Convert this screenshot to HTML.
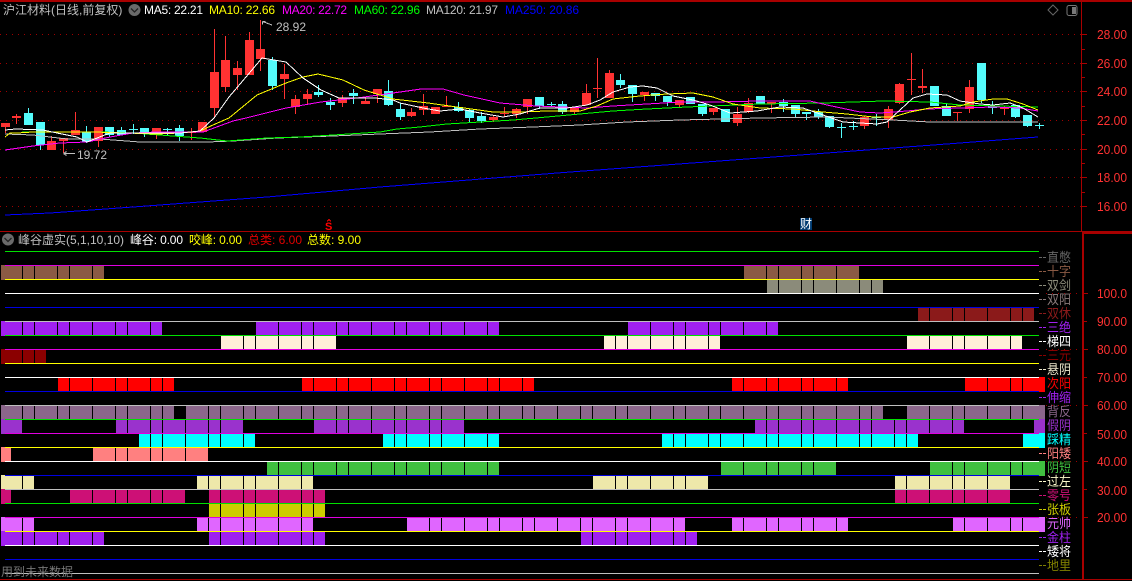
<!DOCTYPE html>
<html><head><meta charset="utf-8"><title>沪江材料</title>
<style>
html,body{margin:0;padding:0;background:#000;width:1132px;height:581px;overflow:hidden}
svg{display:block}
text{font-family:"Liberation Sans","WenQuanYi Zen Hei","Noto Sans CJK SC",sans-serif;font-size:12px}
.a{fill:#ff3232;font-size:13px}
.r text{font-size:13px}
</style></head><body>
<svg width="1132" height="581" viewBox="0 0 1132 581" xmlns="http://www.w3.org/2000/svg">
<rect width="1132" height="581" fill="#000"/>
<g shape-rendering="crispEdges">
<!-- grid -->
<path d="M0 34.5H1081M0 63.5H1081M0 91.5H1081M0 120.5H1081M0 149.5H1081M0 177.5H1081M0 206.5H1081M1046 293.5H1082M1046 349.5H1082M1046 405.5H1082M1046 461.5H1082M1046 517.5H1082" stroke="#a00000" stroke-dasharray="1 5" fill="none"/>
<!-- wicks -->
<path fill="none" stroke="#ff3232" d="M5.5 123V133M16.5 114V124M51.5 136V150M63.5 138V153M75.5 112V135M98.5 127V147M156.5 128V139M191.5 128V140M202.5 122V132M214.5 29V117M225.5 36V92M237.5 61V90M249.5 32V75M260.5 20V71M284.5 64V99M295.5 95V114M307.5 89V104M342.5 95V107M365.5 98V104M377.5 89V103M411.5 108V117M423.5 94V115M435.5 107V114M446.5 96V107M493.5 115V122M504.5 107V117M516.5 108V118M527.5 99V114M574.5 107V115M586.5 84V105M597.5 58V98M609.5 70V98M644.5 92V101M679.5 100V107M713.5 108V115M737.5 107V126M748.5 98V113M771.5 102V113M864.5 116V129M888.5 106V128M899.5 83V104M911.5 53V95M922.5 69V93M957.5 112V121M969.5 80V113M1004.5 106V115"/>
<path fill="none" stroke="#54fcfc" d="M28.5 108V125M40.5 122V150M86.5 126V143M109.5 127V137M121.5 127V135M133.5 124V134M144.5 128V137M167.5 128V135M179.5 125V141M272.5 57V90M318.5 85V97M330.5 98V110M353.5 89V104M388.5 80V106M400.5 103V120M458.5 102V112M469.5 109V122M481.5 112V123M539.5 97V109M551.5 102V106M562.5 101V114M620.5 74V88M632.5 85V102M655.5 93V101M667.5 96V106M690.5 97V104M702.5 104V116M725.5 109V122M760.5 96V104M783.5 99V112M795.5 105V117M806.5 112V120M818.5 109V119M829.5 116V128M841.5 123V138M853.5 121V130M876.5 114V126M934.5 86V106M946.5 104V116M981.5 63V103M992.5 101V114M1015.5 105V118M1027.5 115V127M1039.5 123V129"/>
<!-- bodies -->
<path fill="#ff3232" d="M1 123h9v4h-9zM12 116h9v2h-9zM47 141h9v9h-9zM59 138h9v3h-9zM71 130h9v5h-9zM94 127h9v14h-9zM152 128h9v4h-9zM187 132h9v1h-9zM198 122h9v10h-9zM210 72h9v36h-9zM221 60h9v27h-9zM233 68h9v7h-9zM245 40h9v35h-9zM256 49h9v10h-9zM280 74h9v5h-9zM291 99h9v8h-9zM303 94h9v5h-9zM338 98h9v5h-9zM361 101h9v3h-9zM373 89h9v5h-9zM407 112h9v4h-9zM419 106h9v4h-9zM431 107h9v7h-9zM442 106h9v1h-9zM489 117h9v3h-9zM500 113h9v1h-9zM512 109h9v5h-9zM523 99h9v8h-9zM570 107h9v5h-9zM582 93h9v12h-9zM593 88h9v1h-9zM605 73h9v25h-9zM640 92h9v3h-9zM675 100h9v5h-9zM709 108h9v4h-9zM733 114h9v9h-9zM744 103h9v9h-9zM767 102h9v2h-9zM860 117h9v9h-9zM884 109h9v11h-9zM895 84h9v19h-9zM907 79h9v1h-9zM918 86h9v2h-9zM953 112h9v1h-9zM965 87h9v22h-9zM1000 108h9v1h-9z"/>
<path fill="#54fcfc" d="M24 113h9v12h-9zM36 122h9v23h-9zM82 132h9v10h-9zM105 127h9v8h-9zM117 130h9v5h-9zM129 129h9v1h-9zM140 128h9v5h-9zM163 129h9v1h-9zM175 128h9v8h-9zM268 60h9v26h-9zM314 92h9v3h-9zM326 102h9v3h-9zM349 93h9v3h-9zM384 91h9v14h-9zM396 109h9v8h-9zM454 107h9v4h-9zM465 110h9v8h-9zM477 116h9v5h-9zM535 97h9v9h-9zM547 104h9v1h-9zM558 104h9v8h-9zM616 80h9v5h-9zM628 85h9v9h-9zM651 93h9v3h-9zM663 96h9v6h-9zM686 97h9v7h-9zM698 104h9v10h-9zM721 109h9v13h-9zM756 96h9v8h-9zM779 102h9v4h-9zM791 105h9v9h-9zM802 112h9v2h-9zM814 112h9v5h-9zM825 116h9v11h-9zM837 127h9v1h-9zM849 126h9v1h-9zM872 117h9v1h-9zM930 86h9v20h-9zM942 106h9v10h-9zM977 63h9v37h-9zM988 106h9v2h-9zM1011 105h9v12h-9zM1023 115h9v11h-9zM1035 125h9v1h-9z"/>
<!-- MA lines -->
<g fill="none">
<polyline stroke="#0000ff" points="5,215 50,213 133,207 267,197 380,187 570,172 760,158 827,153 893,148 960,143 1038,137"/>
<polyline stroke="#bfbfbf" points="5,134 33,135 67,139 100,139 140,142 207,142 233,141 277,138 333,136 380,134 430,132 480,129 533,127 580,125 627,122 680,120 760,118 827,117 893,120 930,122 1038,122"/>
<polyline stroke="#00ff00" points="22,132 100,132 133,133 173,136 200,138 227,141 267,138 300,137 333,135 380,132 397,129 420,127 447,124 480,122 513,120 547,117 580,114 613,111 647,109 687,107 760,104 823,103 883,101 930,102 960,105 1038,107"/>
<polyline stroke="#ff00ff" points="5,150 33,146 60,143 87,142 110,137 133,133 157,132 180,132 203,132 233,121 246,118 286,108 321,102 357,98 393,93 421,89 443,89 464,95 500,103 536,106 587,108 613,106 647,104 680,102 713,102 760,101 810,101 827,105 860,112 880,113 907,111 927,109 960,108 993,107 1020,108 1038,111"/>
<polyline stroke="#ffff00" points="5,137 10,133 17,133 33,132 57,132 93,132 127,133 157,134 180,133 200,131 213,125 229,118 257,95 286,83 303,77 318,74 343,80 364,90 393,99 428,103 464,108 493,112 520,112 547,111 580,111 597,106 613,99 640,96 667,94 693,93 713,97 733,104 760,108 793,109 823,112 847,114 873,117 893,117 910,112 930,108 960,106 973,102 993,99 1007,99 1023,104 1038,110"/>
<polyline stroke="#ffffff" points="5,130 16,129 43,130 57,133 77,137 87,142 97,138 110,133 133,133 157,133 180,133 200,131 214,118 229,97 246,77 262,58 286,62 303,78 321,90 339,98 357,98 375,98 393,100 400,103 423,108 440,111 460,109 480,113 503,117 520,114 540,108 567,108 587,105 600,100 613,92 630,87 643,86 657,88 673,96 693,100 710,105 730,113 757,111 780,107 803,108 823,115 843,122 877,124 887,122 900,110 913,98 927,94 947,95 960,101 980,104 993,105 1010,103 1023,108 1038,117"/>
</g>
<!-- high/low markers -->
<path fill="none" stroke="#c0c0c0" d="M262.500 21.500L272 25M262.500 21.500h3M262.500 21.500v3M63.500 153.500H75M63.500 153.500l3 -2M63.500 153.500l3 2"/>
<!-- S marker -->
<path fill="none" stroke="#ff0000" d="M327 221.500L329 219.500L331 221.500"/>
<!-- cai box -->
<rect x="800" y="218" width="12" height="12" fill="#003a70"/>
<!-- frame -->
<path fill="#a80000" d="M0 0h1132v2H0zM1081 0h1v231h-1zM0 231h1132v1H0zM1082 232h50v2h-50zM1082 232h2v348h-2zM0 579h1132v1H0z"/>
<path fill="#a80000" d="M1082 34h5v1h-5zM1082 63h5v1h-5zM1082 91h5v1h-5zM1082 120h5v1h-5zM1082 149h5v1h-5zM1082 177h5v1h-5zM1082 206h5v1h-5zM1082 49h3v1h-3zM1082 77h3v1h-3zM1082 106h3v1h-3zM1082 134h3v1h-3zM1082 163h3v1h-3zM1082 192h3v1h-3zM1084 293h4v1h-4zM1084 321h3v1h-3zM1084 349h4v1h-4zM1084 377h3v1h-3zM1084 405h4v1h-4zM1084 433h3v1h-3zM1084 461h4v1h-4zM1084 489h3v1h-3zM1084 517h4v1h-4z"/>
<!-- indicator bars -->
<path fill="#8b5a44" d="M1 265h103v15H1zM744 265h115v15H744z"/>
<path fill="#8b8b7a" d="M767 279h116v15H767z"/>
<path fill="#8b1a1a" d="M918 307h116v15H918z"/>
<path fill="#a020f0" d="M1 321h161v15H1zM256 321h243v15H256zM628 321h150v15H628z"/>
<path fill="#ffeed8" d="M221 335h115v15H221zM604 335h116v15H604zM907 335h115v15H907z"/>
<path fill="#8b0000" d="M1 349h45v15H1z"/>
<path fill="#ff0000" d="M58 377h116v15H58zM302 377h232v15H302zM732 377h116v15H732zM965 377h80v15H965z"/>
<path fill="#8b668b" d="M1 405h173v15H1zM186 405h697v15H186zM907 405h138v15H907z"/>
<path fill="#9a32cd" d="M1 419h21v15H1zM116 419h127v15H116zM314 419h150v15H314zM755 419h209v15H755zM1034 419h11v15H1034z"/>
<path fill="#00ffff" d="M139 433h116v15H139zM383 433h116v15H383zM662 433h256v15H662zM1023 433h22v15H1023z"/>
<path fill="#ff8080" d="M1 447h10v15H1zM93 447h115v15H93z"/>
<path fill="#40c040" d="M267 461h232v15H267zM721 461h115v15H721zM930 461h115v15H930z"/>
<path fill="#eee8aa" d="M1 475h33v15H1zM197 475h116v15H197zM593 475h115v15H593zM895 475h115v15H895z"/>
<path fill="#cd1076" d="M1 489h10v15H1zM70 489h115v15H70zM209 489h116v15H209zM895 489h115v15H895z"/>
<path fill="#cdcd00" d="M209 503h116v15H209z"/>
<path fill="#e066ff" d="M1 517h33v15H1zM197 517h116v15H197zM407 517h278v15H407zM732 517h116v15H732zM953 517h92v15H953z"/>
<path fill="#a020f0" d="M1 531h103v15H1zM209 531h116v15H209zM581 531h116v15H581z"/>
<!-- dividers -->
<path stroke="#000" fill="none" d="M22.500 252V560M34.500 252V560M57.500 252V560M69.500 252V560M92.500 252V560M115.500 252V560M127.500 252V560M150.500 252V560M162.500 252V560M185.500 252V560M208.500 252V560M220.500 252V560M243.500 252V560M255.500 252V560M278.500 252V560M301.500 252V560M313.500 252V560M336.500 252V560M348.500 252V560M371.500 252V560M394.500 252V560M406.500 252V560M429.500 252V560M441.500 252V560M464.500 252V560M487.500 252V560M499.500 252V560M522.500 252V560M534.500 252V560M557.500 252V560M580.500 252V560M592.500 252V560M615.500 252V560M627.500 252V560M650.500 252V560M673.500 252V560M685.500 252V560M708.500 252V560M720.500 252V560M743.500 252V560M766.500 252V560M778.500 252V560M801.500 252V560M813.500 252V560M836.500 252V560M859.500 252V560M871.500 252V560M894.500 252V560M906.500 252V560M929.500 252V560M952.500 252V560M964.500 252V560M987.500 252V560M1010.500 252V560M1022.500 252V560"/>
<!-- horizontal lines -->
<path fill="#00e000" d="M5 251h1034v1H5zM5 335h1034v1H5zM5 419h1034v1H5zM5 503h1034v1H5z"/>
<path fill="#e000e0" d="M5 265h1034v1H5zM5 349h1034v1H5zM5 433h1034v1H5zM5 517h1034v1H5z"/>
<path fill="#ffff00" d="M5 279h1034v1H5zM5 363h1034v1H5zM5 447h1034v1H5zM5 531h1034v1H5z"/>
<path fill="#ffffff" d="M5 293h1034v1H5zM5 377h1034v1H5zM5 461h1034v1H5zM5 545h1034v1H5z"/>
<path fill="#0000e0" d="M5 307h1034v1H5zM5 391h1034v1H5zM5 475h1034v1H5zM5 559h1034v1H5z"/>
<path fill="#bfbfbf" d="M5 321h1034v1H5zM5 405h1034v1H5zM5 489h1034v1H5zM5 573h1034v1H5z"/>
<!-- dashes -->
<path fill="#666" d="M1039 257h3v1h-3zM1043 257h3v1h-3z"/>
<path fill="#8b5a44" d="M1039 271h3v1h-3zM1043 271h3v1h-3z"/>
<path fill="#8b8b7a" d="M1039 285h3v1h-3zM1043 285h3v1h-3z"/>
<path fill="#8a7a7a" d="M1039 299h3v1h-3zM1043 299h3v1h-3z"/>
<path fill="#8b1a1a" d="M1039 313h3v1h-3zM1043 313h3v1h-3z"/>
<path fill="#a020f0" d="M1039 327h3v1h-3zM1043 327h3v1h-3zM1039 397h3v1h-3zM1043 397h3v1h-3zM1039 537h3v1h-3zM1043 537h3v1h-3z"/>
<path fill="#fff" d="M1039 341h3v1h-3zM1043 341h3v1h-3zM1039 551h3v1h-3zM1043 551h3v1h-3z"/>
<path fill="#8b0000" d="M1039 355h3v1h-3zM1043 355h3v1h-3z"/>
<path fill="#eee8cd" d="M1039 369h3v1h-3zM1043 369h3v1h-3z"/>
<path fill="#ff8080" d="M1039 453h3v1h-3zM1043 453h3v1h-3z"/>
<path fill="#fffacd" d="M1039 481h3v1h-3zM1043 481h3v1h-3z"/>
<path fill="#cd1076" d="M1039 495h3v1h-3zM1043 495h3v1h-3z"/>
<path fill="#cdcd00" d="M1039 509h3v1h-3zM1043 509h3v1h-3z"/>
<path fill="#808000" d="M1039 565h3v1h-3zM1043 565h3v1h-3z"/>
</g>
<!-- legend icons -->
<circle cx="134.500" cy="10" r="6" fill="#6a6a6a"/><path d="M131 8.500l3.500 3.500l3.500-3.500" fill="none" stroke="#222" stroke-width="1.300"/>
<circle cx="8" cy="239.500" r="6" fill="#6a6a6a"/><path d="M4.500 238l3.500 3.500l3.500-3.500" fill="none" stroke="#222" stroke-width="1.300"/>
<path d="M1053 5l5 5l-5 5l-5-5z" fill="none" stroke="#666"/>
<rect x="1067" y="5.500" width="10" height="10" rx="2" fill="none" stroke="#777"/><rect x="1072" y="7" width="4" height="7" fill="#777"/>
<!-- top legend -->
<text x="3" y="14" fill="#c0c0c0">沪江材料(日线,前复权)</text>
<text x="144" y="14" fill="#fff" textLength="59">MA5: 22.21</text>
<text x="209" y="14" fill="#ffff00" textLength="66">MA10: 22.66</text>
<text x="282" y="14" fill="#ff00ff" textLength="65">MA20: 22.72</text>
<text x="354" y="14" fill="#00ff00" textLength="66">MA60: 22.96</text>
<text x="426" y="14" fill="#c0c0c0" textLength="72">MA120: 21.97</text>
<text x="505" y="14" fill="#0000ff" textLength="74">MA250: 20.86</text>
<text x="276" y="31" fill="#c0c0c0" textLength="30">28.92</text>
<text x="77" y="159" fill="#c0c0c0" textLength="30">19.72</text>
<!-- markers -->
<text x="325" y="230" fill="#ff0000" font-weight="bold" style="font-size:11px">S</text>
<text x="800" y="228" fill="#fff">财</text>
<!-- lower legend -->
<text x="18" y="244" fill="#c0c0c0">峰谷虚实(5,1,10,10)</text>
<text x="130" y="244" fill="#fff" textLength="53">峰谷: 0.00</text>
<text x="189" y="244" fill="#ffff00" textLength="53">咬峰: 0.00</text>
<text x="248" y="244" fill="#e00000" textLength="54">总类: 6.00</text>
<text x="307" y="244" fill="#ffff00" textLength="54">总数: 9.00</text>
<text x="1" y="576" fill="#777">用到未来数据</text>
<!-- row labels -->
<g class="r">
<text x="1047" y="262" textLength="24" lengthAdjust="spacingAndGlyphs" fill="#666">直憋</text>
<text x="1047" y="276" textLength="24" lengthAdjust="spacingAndGlyphs" fill="#8b5a44">十字</text>
<text x="1047" y="290" textLength="24" lengthAdjust="spacingAndGlyphs" fill="#8b8b7a">双剑</text>
<text x="1047" y="304" textLength="24" lengthAdjust="spacingAndGlyphs" fill="#8a7a7a">双阳</text>
<text x="1047" y="318" textLength="24" lengthAdjust="spacingAndGlyphs" fill="#8b1a1a">双休</text>
<text x="1047" y="332" textLength="24" lengthAdjust="spacingAndGlyphs" fill="#a020f0">三绝</text>
<text x="1047" y="346" textLength="24" lengthAdjust="spacingAndGlyphs" fill="#fff">梯四</text>
<text x="1047" y="360" textLength="24" lengthAdjust="spacingAndGlyphs" fill="#8b0000">三元</text>
<text x="1047" y="374" textLength="24" lengthAdjust="spacingAndGlyphs" fill="#eee8cd">悬阴</text>
<text x="1047" y="388" textLength="24" lengthAdjust="spacingAndGlyphs" fill="#ff0000">次阳</text>
<text x="1047" y="402" textLength="24" lengthAdjust="spacingAndGlyphs" fill="#a020f0">伸缩</text>
<text x="1047" y="416" textLength="24" lengthAdjust="spacingAndGlyphs" fill="#8b668b">背反</text>
<text x="1047" y="430" textLength="24" lengthAdjust="spacingAndGlyphs" fill="#9a32cd">假阴</text>
<text x="1047" y="444" textLength="24" lengthAdjust="spacingAndGlyphs" fill="#00ffff">踩精</text>
<text x="1047" y="458" textLength="24" lengthAdjust="spacingAndGlyphs" fill="#ff8080">阳矮</text>
<text x="1047" y="472" textLength="24" lengthAdjust="spacingAndGlyphs" fill="#40c040">阴短</text>
<text x="1047" y="486" textLength="24" lengthAdjust="spacingAndGlyphs" fill="#fffacd">过左</text>
<text x="1047" y="500" textLength="24" lengthAdjust="spacingAndGlyphs" fill="#cd1076">零号</text>
<text x="1047" y="514" textLength="24" lengthAdjust="spacingAndGlyphs" fill="#cdcd00">张板</text>
<text x="1047" y="528" textLength="24" lengthAdjust="spacingAndGlyphs" fill="#e066ff">元帅</text>
<text x="1047" y="542" textLength="24" lengthAdjust="spacingAndGlyphs" fill="#a020f0">金柱</text>
<text x="1047" y="556" textLength="24" lengthAdjust="spacingAndGlyphs" fill="#fff">矮将</text>
<text x="1047" y="570" textLength="24" lengthAdjust="spacingAndGlyphs" fill="#808000">地里</text>
</g>
<!-- axes -->
<text class="a" x="1097" y="39" textLength="30" lengthAdjust="spacingAndGlyphs">28.00</text>
<text class="a" x="1097" y="68" textLength="30" lengthAdjust="spacingAndGlyphs">26.00</text>
<text class="a" x="1097" y="96" textLength="30" lengthAdjust="spacingAndGlyphs">24.00</text>
<text class="a" x="1097" y="125" textLength="30" lengthAdjust="spacingAndGlyphs">22.00</text>
<text class="a" x="1097" y="154" textLength="30" lengthAdjust="spacingAndGlyphs">20.00</text>
<text class="a" x="1097" y="182" textLength="30" lengthAdjust="spacingAndGlyphs">18.00</text>
<text class="a" x="1097" y="211" textLength="30" lengthAdjust="spacingAndGlyphs">16.00</text>
<text class="a" x="1097" y="298" textLength="30" lengthAdjust="spacingAndGlyphs">100.0</text>
<text class="a" x="1097" y="326" textLength="30" lengthAdjust="spacingAndGlyphs">90.00</text>
<text class="a" x="1097" y="354" textLength="30" lengthAdjust="spacingAndGlyphs">80.00</text>
<text class="a" x="1097" y="382" textLength="30" lengthAdjust="spacingAndGlyphs">70.00</text>
<text class="a" x="1097" y="410" textLength="30" lengthAdjust="spacingAndGlyphs">60.00</text>
<text class="a" x="1097" y="439" textLength="30" lengthAdjust="spacingAndGlyphs">50.00</text>
<text class="a" x="1097" y="466" textLength="30" lengthAdjust="spacingAndGlyphs">40.00</text>
<text class="a" x="1097" y="495" textLength="30" lengthAdjust="spacingAndGlyphs">30.00</text>
<text class="a" x="1097" y="522" textLength="30" lengthAdjust="spacingAndGlyphs">20.00</text>
</svg>
</body></html>
